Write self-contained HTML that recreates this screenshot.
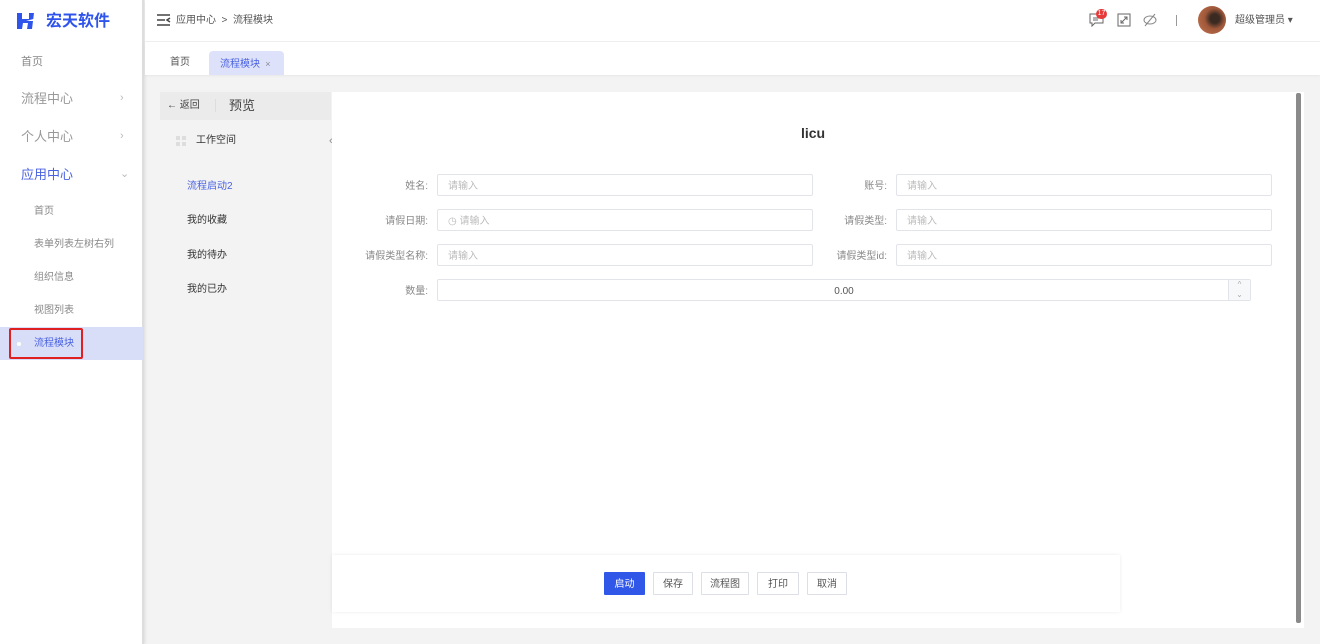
<!DOCTYPE html>
<html><head><meta charset="utf-8"><style>
*{box-sizing:border-box;margin:0;padding:0}
body{width:1320px;height:644px;overflow:hidden;font-family:"Liberation Sans","Noto Sans CJK SC",sans-serif;background:#f3f3f3;position:relative;font-size:12px;color:#333;line-height:1.2}
.abs{position:absolute}
.side{left:0;top:0;width:144px;height:644px;background:#fff;border-right:2px solid #ddd;box-shadow:1px 0 3px rgba(0,0,0,.1)}
.side .it{position:absolute;left:21px;font-size:12px;color:#888;line-height:14px}
.side .big{font-size:13px;color:#999}
.side .chev{position:absolute;left:120px;color:#bbb;font-size:11px}
.side .t10{font-size:10px;line-height:12px}
.hdr{left:145px;top:0;width:1175px;height:42px;background:#fff;border-bottom:1px solid #eee}
.tabs{left:145px;top:42px;width:1175px;height:33px;background:#fff;box-shadow:0 1px 2px rgba(0,0,0,.05)}
.inp{position:absolute;height:22px;border:1px solid #e2e4ea;border-radius:2px;background:#fff;font-size:10px;color:#bbb;padding-left:10px;line-height:20px;padding-top:2px}
.lbl{position:absolute;font-size:10px;color:#888;text-align:right;line-height:22px;padding-top:2px}
.btn{position:absolute;top:572px;height:23px;border:1px solid #dcdfe6;background:#fff;font-size:10px;color:#555;text-align:center;line-height:21px;border-radius:1px;padding-top:1px}
.t10{font-size:10px;line-height:12px}
</style></head><body>
<div class="abs side">
 <svg class="abs" style="left:16px;top:12px" width="22" height="18"><path d="M1 1h5v6h7V1h5l-2 16h-5l1-6H7l-1 6H1z" fill="#2f54eb"/><path d="M10 9l11-3-4 3z" fill="#fff"/></svg>
 <div class="abs" style="left:46px;top:12px;font-size:16px;font-weight:bold;color:#2f54eb;line-height:20px">宏天软件</div>
 <div class="it" style="top:55px;font-size:11px">首页</div>
 <div class="it big" style="top:92px">流程中心</div><div class="chev" style="top:92px">›</div>
 <div class="it big" style="top:130px">个人中心</div><div class="chev" style="top:130px">›</div>
 <div class="it big" style="top:168px;color:#4a62e0">应用中心</div><div class="chev" style="top:168px">⌄</div>
 <div class="it t10" style="left:34px;top:206px">首页</div>
 <div class="it t10" style="left:34px;top:239px">表单列表左树右列</div>
 <div class="it t10" style="left:34px;top:272px">组织信息</div>
 <div class="it t10" style="left:34px;top:305px">视图列表</div>
 <div class="abs" style="left:0;top:327px;width:143px;height:33px;background:#d8def8"></div>
 <div class="abs" style="left:9px;top:328px;width:74px;height:31px;border:2px solid #e02020;border-radius:2px"></div>
 <div class="abs" style="left:17px;top:342px;width:4px;height:4px;border-radius:50%;background:#fff"></div>
 <div class="it t10" style="left:34px;top:338px;color:#4a62e0">流程模块</div>
</div>
<div class="abs hdr">
 <svg class="abs" style="left:12px;top:14px" width="14" height="12"><path d="M0 1h13M0 6h8M0 11h13M13 4l-3 2 3 2" stroke="#444" stroke-width="1.5" fill="none"/></svg>
 <div class="abs t10" style="left:31px;top:15px;color:#555">应用中心 &nbsp;&gt;&nbsp; 流程模块</div>
 <svg class="abs" style="left:944px;top:13px" width="16" height="14"><path d="M1 1h13v9H6l-3 3v-3H1z" stroke="#666" fill="none"/><path d="M4 5h7M4 7h5" stroke="#666"/></svg>
 <div class="abs" style="left:951px;top:9px;width:11px;height:10px;border-radius:5px;background:#e63a3a;color:#fff;font-size:7px;text-align:center;line-height:10px">17</div>
 <svg class="abs" style="left:972px;top:13px" width="14" height="14"><rect x="1" y="1" width="12" height="12" stroke="#666" fill="none"/><path d="M4 10l6-6M7 4h3v3M4 7v3h3" stroke="#666" fill="none"/></svg>
 <svg class="abs" style="left:998px;top:13px" width="14" height="14"><ellipse cx="7" cy="7" rx="6" ry="4" stroke="#888" fill="none"/><path d="M2 13L12 1" stroke="#888"/></svg>
 <div class="abs" style="left:1031px;top:15px;width:1px;height:11px;background:#999"></div>
 <div class="abs" style="left:1053px;top:6px;width:28px;height:28px;border-radius:50%;background:radial-gradient(circle at 60% 45%,#3a2a22 0 20%,#a0583a 45%,#c47650)"></div>
 <div class="abs t10" style="left:1090px;top:15px;color:#555">超级管理员 ▾</div>
</div>
<div class="abs tabs">
 <div class="abs t10" style="left:25px;top:15px;color:#555">首页</div>
 <div class="abs" style="left:64px;top:9px;width:75px;height:24px;background:#dde2fa;border-radius:4px 4px 0 0;color:#4a62e0;font-size:10px;line-height:22px;padding-left:11px;padding-top:2px">流程模块 <span style="font-size:9px;color:#889">&nbsp;×</span></div>
</div>
<div class="abs" style="left:160px;top:92px;width:171px;height:536px;background:#f3f3f3"></div>
<div class="abs" style="left:160px;top:92px;width:171px;height:28px;background:#ebebeb"></div>
<div class="abs t10" style="left:167px;top:100px;color:#444">← 返回</div>
<div class="abs" style="left:215px;top:99px;width:1px;height:13px;background:#ddd"></div>
<div class="abs" style="left:229px;top:98px;font-size:13px;color:#444;line-height:16px">预览</div>
<div class="abs" style="left:176px;top:136px;width:10px;height:10px;background:linear-gradient(#f3f3f3,#f3f3f3) 4px 0/2px 10px no-repeat,linear-gradient(#f3f3f3,#f3f3f3) 0 4px/10px 2px no-repeat,#ddd"></div>
<div class="abs t10" style="left:196px;top:135px;color:#333">工作空间</div>
<div class="abs t10" style="left:187px;top:181px;color:#4a62e0">流程启动2</div>
<div class="abs t10" style="left:187px;top:215px;color:#333">我的收藏</div>
<div class="abs t10" style="left:187px;top:250px;color:#333">我的待办</div>
<div class="abs t10" style="left:187px;top:284px;color:#333">我的已办</div>
<div class="abs" style="left:329px;top:128px;width:10px;height:26px;background:#f3f3f3;color:#888;font-size:11px;line-height:26px">‹</div>
<div class="abs" style="left:332px;top:92px;width:972px;height:536px;background:#fff"></div>
<div class="abs" style="left:1296px;top:93px;width:5px;height:530px;background:#8a8a8a;border-radius:2px"></div>
<div class="abs" style="left:783px;top:125px;width:60px;text-align:center;font-size:14px;font-weight:bold;color:#333;line-height:17px">licu</div>
<div class="lbl" style="left:340px;width:88px;top:174px">姓名:</div>
<div class="inp" style="left:437px;top:174px;width:376px">请输入</div>
<div class="lbl" style="left:800px;width:87px;top:174px">账号:</div>
<div class="inp" style="left:896px;top:174px;width:376px">请输入</div>
<div class="lbl" style="left:340px;width:88px;top:209px">请假日期:</div>
<div class="inp" style="left:437px;top:209px;width:376px">◷ 请输入</div>
<div class="lbl" style="left:800px;width:87px;top:209px">请假类型:</div>
<div class="inp" style="left:896px;top:209px;width:376px">请输入</div>
<div class="lbl" style="left:340px;width:88px;top:244px">请假类型名称:</div>
<div class="inp" style="left:437px;top:244px;width:376px">请输入</div>
<div class="lbl" style="left:800px;width:87px;top:244px">请假类型id:</div>
<div class="inp" style="left:896px;top:244px;width:376px">请输入</div>
<div class="lbl" style="left:340px;width:88px;top:279px">数量:</div>
<div class="inp" style="left:437px;top:279px;width:814px;color:#555;text-align:center;padding-left:0">0.00</div>
<div class="abs" style="left:1228px;top:280px;width:22px;height:20px;border-left:1px solid #e2e4ea;background:#f7f8fa;color:#aaa;font-size:8px;text-align:center;line-height:10px">^<br>⌄</div>
<div class="abs" style="left:332px;top:555px;width:788px;height:57px;background:#fff;box-shadow:0 0 4px rgba(0,0,0,.08)"></div>
<div class="btn" style="left:604px;width:41px;background:#3057e8;border-color:#3057e8;color:#fff">启动</div>
<div class="btn" style="left:653px;width:40px">保存</div>
<div class="btn" style="left:701px;width:48px">流程图</div>
<div class="btn" style="left:757px;width:42px">打印</div>
<div class="btn" style="left:807px;width:40px">取消</div>
</body></html>
